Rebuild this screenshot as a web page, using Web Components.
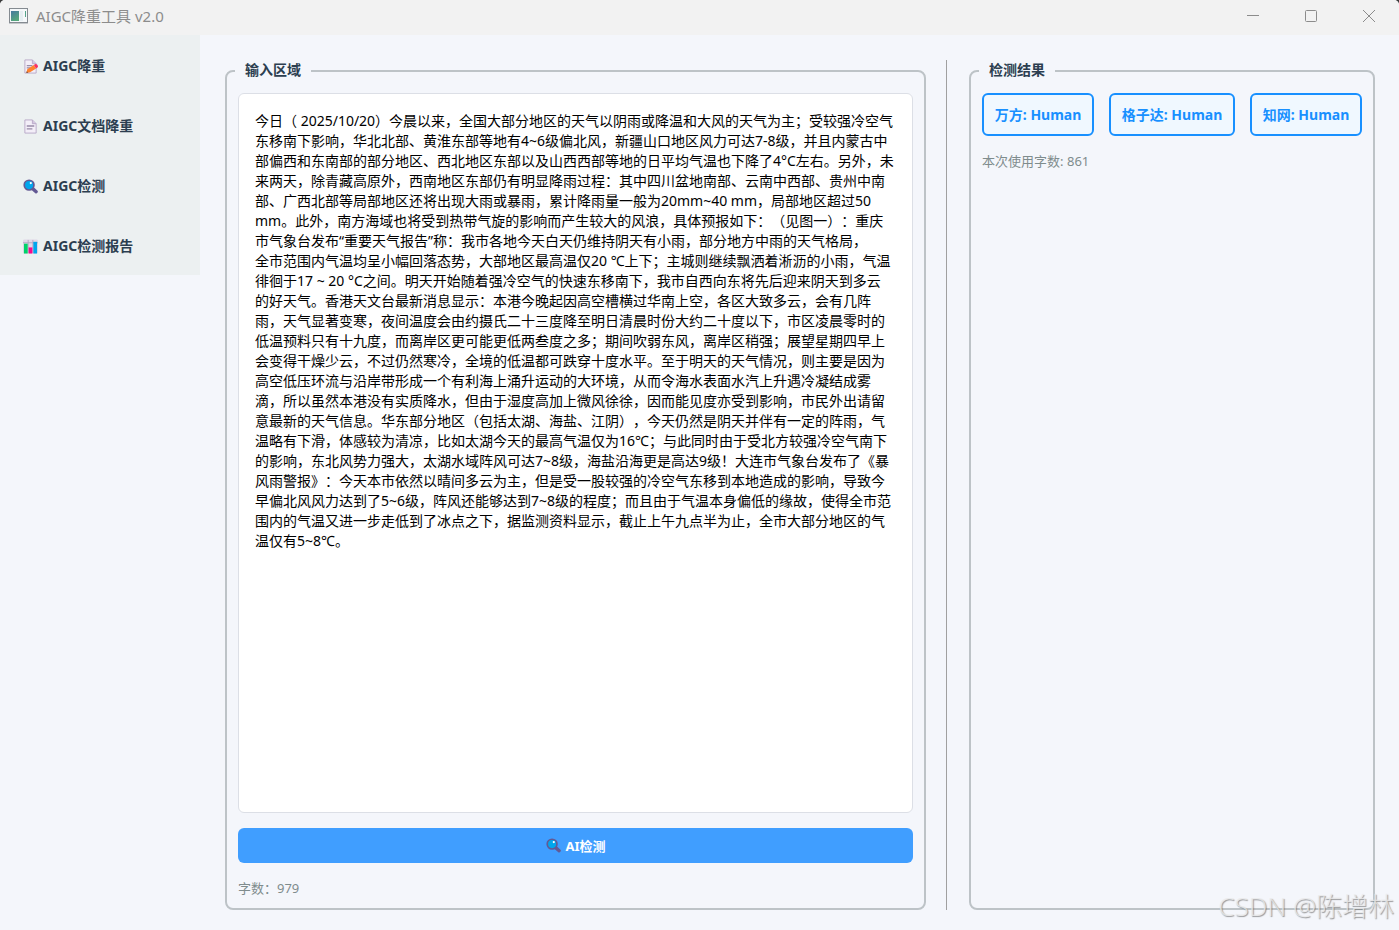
<!DOCTYPE html>
<html lang="zh-CN">
<head>
<meta charset="UTF-8">
<title>AIGC降重工具 v2.0</title>
<style>
    html {
        height: 100%;
        background: #3a3a3a;
    }

    body {
        margin: 0;
        height: 100%;
        font-family: "Noto Sans", "Noto Sans CJK SC", sans-serif;
        font-size: 14px;
        line-height: 20px;
        text-spacing-trim: space-all;
        color: #2c3e50;
    }
</style>
</head>
<body>
<aigc-app></aigc-app>

<script>
// 图标
const ICONS = {
    memo: `
        <path d="M2 1h8l4 4v10H2z" fill="#f3eef8" stroke="#b9a9c9"/>
        <path d="M10 1v4h4" fill="#d3c6df" stroke="#b9a9c9"/>
        <path d="M4 7h6M4 9.500h4" stroke="#998ba8" stroke-width="1.300"/>
        <path d="M4.500 11l7-4.500 2.500 3.500-6.500 4L3.500 15z" fill="#ff822d"/>
        <path d="M11.500 6.500l1.700-1.200q2.800 0 2.800 3.200l-2 1.500z" fill="#f92f60"/>
        <path d="M3.500 15l.5-2 1.700 1.500z" fill="#5d4a45"/>`,
    page: `
        <path d="M2 1h8l4 4v10H2z" fill="#f3eef8" stroke="#b9a9c9"/>
        <path d="M10 1v4h4" fill="#d3c6df" stroke="#b9a9c9"/>
        <path d="M4 7.500h8M4 10.500h6" stroke="#998ba8" stroke-width="1.500"/>`,
    search: `
        <path d="M10 10l4 3.500" stroke="#635994" stroke-width="3.600" stroke-linecap="round"/>
        <circle cx="6.500" cy="6.500" r="5.200" fill="#00a6ed" stroke="#635994" stroke-width="1.800"/>
        <circle cx="8.300" cy="4.300" r="1.200" fill="#fff"/>`,
    chart: `
        <rect x="0" y="0.500" width="16" height="15" rx="1.500" fill="#e0d8e8"/>
        <path d="M0 4h16M5.500 1v14M10.500 1v14" stroke="#b4a6c3"/>
        <rect x="1" y="5" width="4" height="10.500" fill="#00d26a"/>
        <rect x="6" y="9" width="4" height="6.500" fill="#f70a8d"/>
        <rect x="11" y="3" width="4" height="12.500" fill="#00a6ed"/>`
};

const ARTICLE = `今日（ 2025/10/20）今晨以来，全国大部分地区的天气以阴雨或降温和大风的天气为主；受较强冷空气
东移南下影响，华北北部、黄淮东部等地有4~6级偏北风，新疆山口地区风力可达7-8级，并且内蒙古中
部偏西和东南部的部分地区、西北地区东部以及山西西部等地的日平均气温也下降了4°C左右。另外，未
来两天，除青藏高原外，西南地区东部仍有明显降雨过程：其中四川盆地南部、云南中西部、贵州中南
部、广西北部等局部地区还将出现大雨或暴雨，累计降雨量一般为20mm~40 mm，局部地区超过50
mm。此外，南方海域也将受到热带气旋的影响而产生较大的风浪，具体预报如下：（见图一）：重庆
市气象台发布“重要天气报告”称：我市各地今天白天仍维持阴天有小雨，部分地方中雨的天气格局，
全市范围内气温均呈小幅回落态势，大部地区最高温仅20 ℃上下；主城则继续飘洒着淅沥的小雨，气温
徘徊于17 ~ 20 °C之间。明天开始随着强冷空气的快速东移南下，我市自西向东将先后迎来阴天到多云
的好天气。香港天文台最新消息显示：本港今晚起因高空槽横过华南上空，各区大致多云，会有几阵
雨，天气显著变寒，夜间温度会由约摄氏二十三度降至明日清晨时份大约二十度以下，市区凌晨零时的
低温预料只有十九度，而离岸区更可能更低两叁度之多；期间吹弱东风，离岸区稍强；展望星期四早上
会变得干燥少云，不过仍然寒冷，全境的低温都可跌穿十度水平。至于明天的天气情况，则主要是因为
高空低压环流与沿岸带形成一个有利海上涌升运动的大环境，从而令海水表面水汽上升遇冷凝结成雾
滴，所以虽然本港没有实质降水，但由于湿度高加上微风徐徐，因而能见度亦受到影响，市民外出请留
意最新的天气信息。华东部分地区（包括太湖、海盐、江阴），今天仍然是阴天并伴有一定的阵雨，气
温略有下滑，体感较为清凉，比如太湖今天的最高气温仅为16℃；与此同时由于受北方较强冷空气南下
的影响，东北风势力强大，太湖水域阵风可达7~8级，海盐沿海更是高达9级！大连市气象台发布了《暴
风雨警报》：今天本市依然以晴间多云为主，但是受一股较强的冷空气东移到本地造成的影响，导致今
早偏北风风力达到了5~6级，阵风还能够达到7~8级的程度；而且由于气温本身偏低的缘故，使得全市范
围内的气温又进一步走低到了冰点之下，据监测资料显示，截止上午九点半为止，全市大部分地区的气
温仅有5~8℃。`;

class AppIcon extends HTMLElement {
    constructor() {
        super();
        this.attachShadow({ mode: 'open' });
    }

    connectedCallback() {
        this.shadowRoot.innerHTML = `
            <style>
                :host {
                    display: block;
                    width: 15px;
                    height: 15px;
                    flex: none;
                }

                svg {
                    display: block;
                    width: 100%;
                    height: 100%;
                }
            </style>
            <svg viewBox="0 0 16 16" fill="none" aria-hidden="true">${ICONS[this.getAttribute('name')]}</svg>
        `;
    }
}

class TitleBar extends HTMLElement {
    constructor() {
        super();
        this.attachShadow({ mode: 'open' });
        this.shadowRoot.innerHTML = `
            <style>
                :host {
                    display: flex;
                    align-items: center;
                    height: 35px;
                    padding: 0 1px 4px 9px;
                    box-sizing: border-box;
                    background: #f2f2f2;
                    color: #8c8c8c;
                }

                .logo {
                    width: 19px;
                    height: 16px;
                }

                h1 {
                    flex: 1;
                    margin: 0 0 0 8px;
                    font-size: 15px;
                    font-weight: 400;
                }

                .controls {
                    display: flex;
                }

                button {
                    width: 58px;
                    height: 30px;
                    padding: 0;
                    border: none;
                    background: transparent;
                    color: inherit;
                }

                button svg {
                    display: block;
                    margin: 0 auto;
                }

                button:hover {
                    background: #e0e0e0;
                }
            </style>
            <svg class="logo" viewBox="0 0 19 16" aria-hidden="true">
                <defs>
                    <linearGradient id="g" x1="0" y1="0" x2="0.500" y2="1">
                        <stop offset="0" stop-color="#4679a0"/>
                        <stop offset="1" stop-color="#56a87c"/>
                    </linearGradient>
                </defs>
                <rect x="0.500" y="0.500" width="18" height="14" fill="#f5f8fa" stroke="#858b91"/>
                <path d="M0 15.500h19" stroke="#c4c7ca"/>
                <rect x="2" y="3" width="8" height="10" fill="url(#g)"/>
                <rect x="11" y="3" width="3" height="10" fill="#e5eef2"/>
                <rect x="16" y="3" width="1" height="6" fill="#55a48a"/>
            </svg>
            <h1><slot></slot></h1>
            <div class="controls">
                <button aria-label="最小化">
                    <svg width="12" height="12" fill="none" stroke="currentColor"><path d="M0 5.500h12"/></svg>
                </button>
                <button aria-label="最大化">
                    <svg width="12" height="12" fill="none" stroke="currentColor"><rect x="0.500" y="0.500" width="11" height="11" rx="1"/></svg>
                </button>
                <button aria-label="关闭">
                    <svg width="12" height="12" fill="none" stroke="currentColor"><path d="M0 0l12 12M12 0L0 12"/></svg>
                </button>
            </div>
        `;
    }
}

class NavItem extends HTMLElement {
    constructor() {
        super();
        this.attachShadow({ mode: 'open' });
    }

    connectedCallback() {
        this.shadowRoot.innerHTML = `
            <style>
                :host {
                    display: block;
                }

                button {
                    display: flex;
                    align-items: center;
                    gap: 5px;
                    width: 100%;
                    height: 60px;
                    padding: 2px 23px 0;
                    border: none;
                    background: transparent;
                    color: #2c3e50;
                    font: inherit;
                    font-weight: 700;
                    text-align: left;
                }

                button:hover {
                    background: #dde4e6;
                }
            </style>
            <button>
                <app-icon name="${this.getAttribute('icon')}"></app-icon>
                <span><slot></slot></span>
            </button>
        `;
    }
}

class GroupBox extends HTMLElement {
    constructor() {
        super();
        this.attachShadow({ mode: 'open' });
    }

    connectedCallback() {
        this.shadowRoot.innerHTML = `
            <style>
                :host {
                    display: flex;
                    min-width: 0;
                }

                fieldset {
                    flex: 1;
                    display: flex;
                    flex-direction: column;
                    min-width: 0;
                    margin: 0;
                    padding: 11px 11px 10px;
                    border: 2px solid #bdc3c7;
                    border-radius: 8px;
                }

                legend {
                    margin-left: -3px;
                    padding: 0 10px 2px;
                    font-weight: 700;
                }
            </style>
            <fieldset>
                <legend>${this.getAttribute('heading')}</legend>
                <slot></slot>
            </fieldset>
        `;
    }
}

class TextPanel extends HTMLElement {
    constructor() {
        super();
        this.attachShadow({ mode: 'open' });
        this.shadowRoot.innerHTML = `
            <style>
                :host {
                    flex: 1;
                    display: flex;
                    flex-direction: column;
                    min-height: 0;
                }

                textarea {
                    flex: 1;
                    box-sizing: border-box;
                    width: 100%;
                    margin: 0;
                    padding: 17px 16px;
                    border: 1px solid #dcdfe6;
                    border-radius: 6px;
                    background: #fff;
                    color: #000;
                    font: inherit;
                    text-spacing-trim: inherit;
                    resize: none;
                    overflow: hidden;
                    outline: none;
                }

                button {
                    display: flex;
                    align-items: center;
                    justify-content: center;
                    gap: 5px;
                    height: 35px;
                    margin: 15px 0;
                    border: none;
                    border-radius: 6px;
                    background: #409eff;
                    color: #fff;
                    font: inherit;
                    font-size: 13px;
                    font-weight: 700;
                }

                button:hover {
                    background: #66b1ff;
                }

                output {
                    font-size: 13px;
                    color: #7f8c8d;
                }
            </style>
            <textarea aria-label="输入区域" wrap="off" spellcheck="false"></textarea>
            <button><app-icon name="search"></app-icon><span>AI检测</span></button>
            <output>字数：979</output>
        `;
        this.shadowRoot.querySelector('textarea').textContent = ARTICLE;
    }
}

class ResultTag extends HTMLElement {
    constructor() {
        super();
        this.attachShadow({ mode: 'open' });
        this.shadowRoot.innerHTML = `
            <style>
                :host {
                    display: block;
                    box-sizing: border-box;
                    padding: 10px;
                    border: 2px solid #1890ff;
                    border-radius: 6px;
                    background: #f0f8ff;
                    color: #1890ff;
                    font-weight: 700;
                    line-height: 19px;
                    white-space: nowrap;
                    text-align: center;
                }
            </style>
            <slot></slot>
        `;
    }
}

class AigcApp extends HTMLElement {
    constructor() {
        super();
        this.attachShadow({ mode: 'open' });
    }

    connectedCallback() {
        this.render();
    }

    render() {
        this.shadowRoot.innerHTML = `
            <style>
                :host {
                    display: flex;
                    flex-direction: column;
                    height: 100%;
                    position: relative;
                    background: #f4f6fb;
                    border-radius: 5px 5px 0 0;
                    overflow: hidden;
                }

                .body {
                    flex: 1;
                    display: flex;
                    min-height: 0;
                }

                nav {
                    flex: none;
                    align-self: flex-start;
                    width: 200px;
                    background: #ecf0f1;
                }

                main {
                    flex: 1;
                    display: flex;
                    min-width: 0;
                    padding: 25px 24px 20px 25px;
                }

                .input {
                    flex: 19;
                }

                .splitter {
                    flex: none;
                    width: 1px;
                    margin: 0 22px 0 20px;
                    background: #a0a0a0;
                }

                .result {
                    flex: 11;
                }

                .tags {
                    display: flex;
                    gap: 15px;
                }

                .tags result-tag {
                    flex: auto;
                }

                p {
                    margin: 15px 0 0;
                    font-size: 13px;
                    color: #7f8c8d;
                }

                .watermark {
                    position: absolute;
                    right: 5px;
                    bottom: 6px;
                    font-size: 26px;
                    font-weight: 300;
                    line-height: 36px;
                    color: rgba(235, 235, 235, 0.8);
                    text-shadow: 1px 1px 1px rgba(90, 90, 90, 0.6);
                    pointer-events: none;
                }
            </style>
            <title-bar>AIGC降重工具 v2.0</title-bar>
            <div class="body">
                <nav>
                    <nav-item icon="memo">AIGC降重</nav-item>
                    <nav-item icon="page">AIGC文档降重</nav-item>
                    <nav-item icon="search">AIGC检测</nav-item>
                    <nav-item icon="chart">AIGC检测报告</nav-item>
                </nav>
                <main>
                    <group-box class="input" heading="输入区域">
                        <text-panel></text-panel>
                    </group-box>
                    <div class="splitter"></div>
                    <group-box class="result" heading="检测结果">
                        <div class="tags">
                            <result-tag>万方: Human</result-tag>
                            <result-tag>格子达: Human</result-tag>
                            <result-tag>知网: Human</result-tag>
                        </div>
                        <p>本次使用字数: 861</p>
                    </group-box>
                </main>
            </div>
            <div class="watermark">CSDN @陈增林</div>
        `;
    }
}

customElements.define('app-icon', AppIcon);
customElements.define('title-bar', TitleBar);
customElements.define('nav-item', NavItem);
customElements.define('group-box', GroupBox);
customElements.define('text-panel', TextPanel);
customElements.define('result-tag', ResultTag);
customElements.define('aigc-app', AigcApp);
</script>
</body>
</html>
